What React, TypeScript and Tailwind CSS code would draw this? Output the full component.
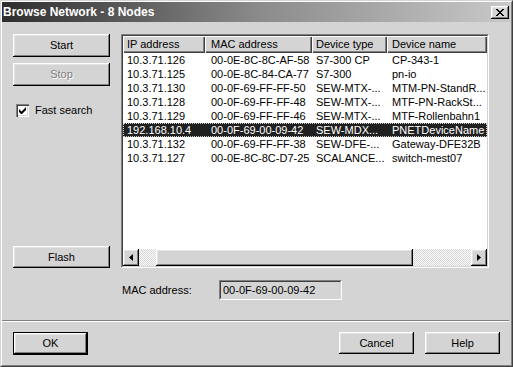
import React from "react";

const rows: string[][] = [
  ["10.3.71.126", "00-0E-8C-8C-AF-58", "S7-300 CP", "CP-343-1"],
  ["10.3.71.125", "00-0E-8C-84-CA-77", "S7-300", "pn-io"],
  ["10.3.71.130", "00-0F-69-FF-FF-50", "SEW-MTX-...", "MTM-PN-StandR..."],
  ["10.3.71.128", "00-0F-69-FF-FF-48", "SEW-MTX-...", "MTF-PN-RackSt..."],
  ["10.3.71.129", "00-0F-69-FF-FF-46", "SEW-MTX-...", "MTF-Rollenbahn1"],
  ["192.168.10.4", "00-0F-69-00-09-42", "SEW-MDX...", "PNETDeviceName"],
  ["10.3.71.132", "00-0F-69-FF-FF-38", "SEW-DFE-...", "Gateway-DFE32B"],
  ["10.3.71.127", "00-0E-8C-8C-D7-25", "SCALANCE...", "switch-mest07"],
];

const raised =
  "shadow-[inset_-1px_-1px_0_#000,inset_1px_1px_0_#fff,inset_-2px_-2px_0_#808080,inset_2px_2px_0_#e4e4e4]";

function Btn({ label, disabled, def, className }: { label: string; disabled?: boolean; def?: boolean; className?: string }) {
  const inner = (
    <div className={`w-full h-full flex items-center justify-center bg-[#d4d4d4] ${raised}`}>
      <span className={disabled ? "text-[#808080] [text-shadow:1px_1px_0_#fff]" : "text-black"}>{label}</span>
    </div>
  );
  if (def) {
    return <div className={`border border-black ${className ?? ""}`}>{inner}</div>;
  }
  return <div className={className}>{inner}</div>;
}

const widths = ["w-[82px] pl-[4px]", "w-[107px] pl-[6px]", "w-[75px] pl-[4px]", "w-[100px] pl-[5px]"];
const headers = ["IP address", "MAC address", "Device type", "Device name"];

export default function App() {
  return (
    <div
      className="w-[513px] h-[367px] bg-[#d4d4d4] border border-t-[#d4d4d4] border-l-[#d4d4d4] border-r-[#404040] border-b-[#404040] text-[11px] text-black overflow-hidden"
      style={{ fontFamily: '"Liberation Sans", Arial, sans-serif' }}
    >
      <div className="w-full h-full border border-t-white border-l-white border-r-[#808080] border-b-[#808080] flex flex-col">
        {/* title bar */}
        <div className="h-[20px] mr-[1px] flex items-center justify-between bg-[linear-gradient(to_right,#2e2e2e,#8a8a8a_50%,#c8c8c8)] pl-[1px] pr-[1px]">
          <span className="text-white font-bold text-[12px] leading-none">Browse Network - 8 Nodes</span>
          <div className={`w-[18px] h-[13px] bg-[#d4d4d4] flex items-center justify-center ${raised}`}>
            <svg width="8" height="7" viewBox="0 0 8 7">
              <path d="M0 0h2v1h1v1h2V1h1V0h2v1H7v1H6v1H5v1h1v1h1v1h1v1H6V6H5V5H3v1H2v1H0V6h1V5h1V4h1V3H2V2H1V1H0z" fill="#000" />
            </svg>
          </div>
        </div>

        {/* body */}
        <div className="flex pl-[11px] pt-[12px]">
          {/* left column */}
          <div className="w-[97px] h-[234px] flex flex-col">
            <Btn label="Start" className="h-[23px]" />
            <Btn label="Stop" disabled className="h-[23px] mt-[6px]" />
            <div className="flex items-center mt-[18px] ml-[3px] h-[13px]">
              <div className="w-[13px] h-[13px] bg-white shadow-[inset_1px_1px_0_#808080,inset_2px_2px_0_#404040,inset_-1px_-1px_0_#fff,inset_-2px_-2px_0_#d4d4d4] flex items-center justify-center">
                <svg width="7" height="7" viewBox="0 0 7 7">
                  <path d="M0 2v3l2 2h1l4-4V0L2.5 4.5z" fill="#000" />
                </svg>
              </div>
              <span className="ml-[6px]">Fast search</span>
            </div>
            <Btn label="Flash" className="h-[22px] mt-auto" />
          </div>

          {/* right column */}
          <div className="ml-[11px] flex flex-col">
            <div className="w-[368px] h-[234px] border border-t-[#808080] border-l-[#808080] border-r-white border-b-white">
              <div className="w-full h-full border border-t-[#404040] border-l-[#404040] border-r-[#d4d4d4] border-b-[#d4d4d4] bg-white flex flex-col">
                {/* header */}
                <div className="flex h-[17px]">
                  {headers.map((h, i) => (
                    <div key={h} className={`${widths[i]} h-full flex items-center bg-[#d4d4d4] shadow-[inset_1px_1px_0_#fff,inset_-1px_-1px_0_#404040,inset_-2px_-2px_0_#808080]`}>
                      {h}
                    </div>
                  ))}
                </div>
                {/* rows */}
                <div className="flex-1 flex flex-col">
                  {rows.map((r, ri) => {
                    const sel = ri === 5;
                    return (
                      <div
                        key={ri}
                        className={`flex h-[14px] items-center ${sel ? "bg-[#202020] text-white outline-1 outline-dotted outline-[#cfcfcf] -outline-offset-1" : ""}`}
                      >
                        {r.map((c, ci) => (
                          <div key={ci} className={`${widths[ci]} whitespace-nowrap overflow-hidden`}>
                            {c}
                          </div>
                        ))}
                      </div>
                    );
                  })}
                </div>
                {/* horizontal scrollbar */}
                <div className="h-[17px] flex">
                  <div className={`w-[16px] h-full bg-[#d4d4d4] flex items-center justify-center ${raised}`}>
                    <svg width="4" height="7" viewBox="0 0 4 7"><path d="M4 0v7L0 3.5z" fill="#000" /></svg>
                  </div>
                  <div className="w-[17px] h-full bg-[repeating-conic-gradient(#ffffff_0_25%,#d4d4d4_0_50%)] bg-[length:2px_2px]" />
                  <div className={`w-[257px] h-full bg-[#d4d4d4] ${raised}`} />
                  <div className="w-[58px] h-full bg-[repeating-conic-gradient(#ffffff_0_25%,#d4d4d4_0_50%)] bg-[length:2px_2px]" />
                  <div className={`w-[16px] h-full bg-[#d4d4d4] flex items-center justify-center ${raised}`}>
                    <svg width="4" height="7" viewBox="0 0 4 7"><path d="M0 0v7L4 3.5z" fill="#000" /></svg>
                  </div>
                </div>
              </div>
            </div>

            <div className="flex items-center mt-[12px] h-[20px]">
              <span className="ml-[1px] w-[97px]">MAC address:</span>
              <div className="w-[123px] h-[20px] border border-t-[#808080] border-l-[#808080] border-r-white border-b-white">
                <div className="w-full h-full border border-t-[#404040] border-l-[#404040] border-r-[#d4d4d4] border-b-[#d4d4d4] flex items-center pl-[2px]">
                  00-0F-69-00-09-42
                </div>
              </div>
            </div>
          </div>
        </div>

        {/* separator */}
        <div className="mt-[20px] mr-[2px] h-[2px] border-t border-t-[#808080] border-b border-b-white" />

        {/* bottom buttons */}
        <div className="flex mt-[10px] pl-[11px] pr-[11px]">
          <Btn label="OK" def className="w-[75px] h-[23px]" />
          <div className="flex-1" />
          <Btn label="Cancel" className="w-[75px] h-[22px]" />
          <Btn label="Help" className="w-[75px] h-[22px] ml-[11px]" />
        </div>
      </div>
    </div>
  );
}
